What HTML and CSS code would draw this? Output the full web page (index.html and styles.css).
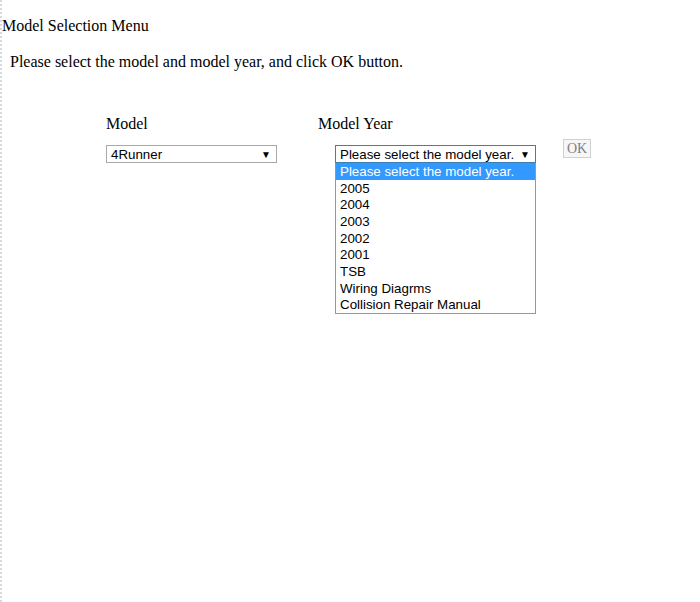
FILE: index.html
```html
<!DOCTYPE html>
<html>
<head>
<meta charset="utf-8">
<title>Model Selection Menu</title>
<link rel="stylesheet" href="styles.css">
</head>
<body>
<div class="page">
  <div class="title">Model Selection Menu</div>
  <div class="intro">Please select the model and model year, and click OK button.</div>
  <div class="form">
    <div class="col col-model">
      <div class="label">Model</div>
      <div class="select select-model">
        <span class="value">4Runner</span>
        <span class="arrow">&#9660;</span>
      </div>
    </div>
    <div class="col col-year">
      <div class="label">Model Year</div>
      <div class="year-row">
        <div class="select-wrap">
          <div class="select select-year">
            <span class="value">Please select the model year.</span>
            <span class="arrow">&#9660;</span>
          </div>
          <ul class="options">
            <li class="selected">Please select the model year.</li>
            <li>2005</li>
            <li>2004</li>
            <li>2003</li>
            <li>2002</li>
            <li>2001</li>
            <li>TSB</li>
            <li>Wiring Diagrms</li>
            <li>Collision Repair Manual</li>
          </ul>
        </div>
        <button class="ok">OK</button>
      </div>
    </div>
  </div>
</div>
</body>
</html>
```
FILE: styles.css
```css
html, body {
  margin: 0;
  padding: 0;
  background: #fff;
}
body {
  font-family: "Liberation Serif", "Times New Roman", serif;
  font-size: 16px;
  color: #000;
}
.page {
  min-height: 602px;
  border-left: 2px dotted #d6dae2;
  box-sizing: border-box;
}
.title {
  padding-top: 17px;
  line-height: 18px;
}
.intro {
  margin-top: 18px;
  padding-left: 8px;
  line-height: 18px;
}
.form {
  display: flex;
  margin-top: 44px;
  margin-left: 104px;
}
.col-model {
  width: 212px;
}
.label {
  line-height: 18px;
}
.select {
  display: flex;
  align-items: center;
  justify-content: space-between;
  box-sizing: border-box;
  height: 18px;
  border: 1px solid #a9a9a9;
  background: #fff;
  font-family: "Liberation Sans", Arial, sans-serif;
  font-size: 13.33px;
  line-height: 15px;
  padding: 0 5px 0 4px;
  margin-top: 12px;
}
.select-model {
  width: 171px;
}
.arrow {
  font-size: 10px;
  color: #000;
}
.year-row {
  display: flex;
  align-items: flex-start;
  margin-left: 17px;
}
.select-wrap {
  position: relative;
  width: 201px;
}
.select-year {
  width: 201px;
  border-color: #3c7fb1;
}
.options {
  position: absolute;
  left: 0;
  top: 30px;
  width: 201px;
  box-sizing: border-box;
  margin: 0;
  padding: 0;
  list-style: none;
  border: 1px solid #7f9db9;
  border-top: none;
  background: #fff;
  font-family: "Liberation Sans", Arial, sans-serif;
  font-size: 13.33px;
}
.options li {
  height: 16.67px;
  line-height: 17px;
  padding-left: 4px;
  white-space: nowrap;
}
.options li.selected {
  background: #3399ff;
  color: #fff;
}
.ok {
  margin-left: 27px;
  margin-top: 6px;
  width: 28px;
  height: 19px;
  padding: 0;
  border: 1px solid #d0d0d0;
  background: #f6f6f6;
  color: #808080;
  font-family: "Liberation Serif", "Times New Roman", serif;
  font-size: 14px;
}
```
